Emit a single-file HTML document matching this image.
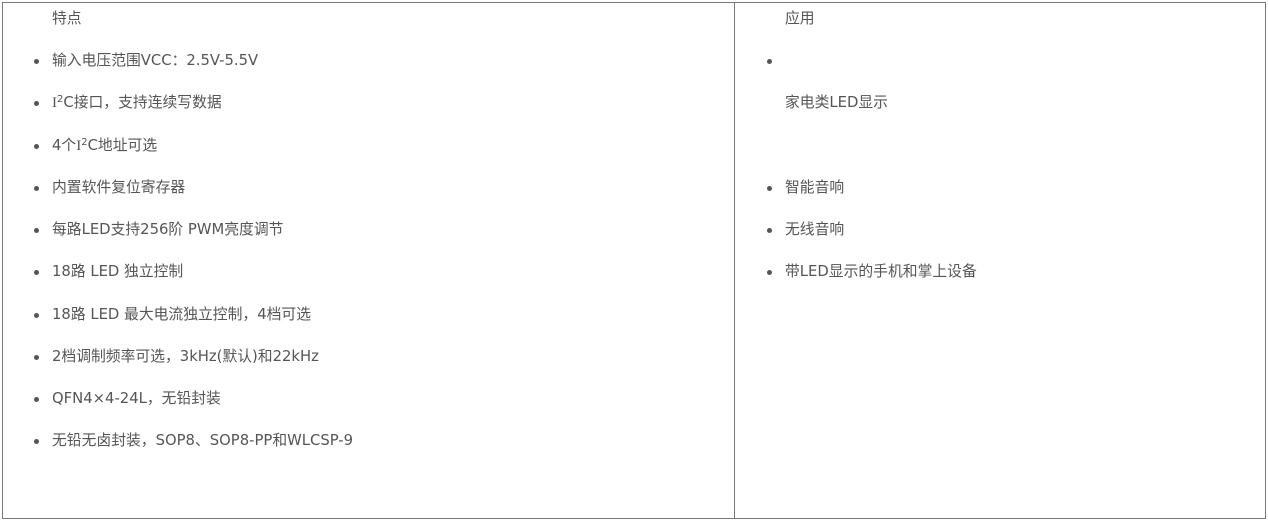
<!DOCTYPE html>
<html><head><meta charset="utf-8"><style>
body{margin:0;width:1268px;height:521px;background:#fff;position:relative;overflow:hidden;font-family:"DejaVu Sans","Noto Sans CJK SC",sans-serif;font-size:14.8px;color:#555}
.box{position:absolute;left:2px;top:2px;width:1264px;height:517px;border:1px solid #777;box-sizing:border-box}
.div{position:absolute;left:734px;top:2px;width:1px;height:517px;background:#777}
.t{position:absolute;line-height:20px;white-space:nowrap;margin-top:1px}
.b{position:absolute;width:5px;height:5px;border-radius:50%;background:#555}
sup{font-size:10px;line-height:0;vertical-align:5px}
.s{font-family:"Liberation Serif",serif;font-size:15px}
</style></head><body>
<div class="box"></div><div class="div"></div>
<div class="t" style="left:52px;top:8px">特点</div>
<div class="b" style="left:34px;top:59px"></div><div class="t" style="left:52px;top:50px">输入电压范围VCC：2.5V-5.5V</div>
<div class="b" style="left:34px;top:101px"></div><div class="t" style="left:52px;top:92px"><span class="s">I</span><sup>2</sup>C接口，支持连续写数据</div>
<div class="b" style="left:34px;top:144px"></div><div class="t" style="left:52px;top:135px">4个<span class="s">I</span><sup>2</sup>C地址可选</div>
<div class="b" style="left:34px;top:186px"></div><div class="t" style="left:52px;top:177px">内置软件复位寄存器</div>
<div class="b" style="left:34px;top:228px"></div><div class="t" style="left:52px;top:219px">每路LED支持256阶 PWM亮度调节</div>
<div class="b" style="left:34px;top:270px"></div><div class="t" style="left:52px;top:261px">18路 LED 独立控制</div>
<div class="b" style="left:34px;top:313px"></div><div class="t" style="left:52px;top:304px">18路 LED 最大电流独立控制，4档可选</div>
<div class="b" style="left:34px;top:355px"></div><div class="t" style="left:52px;top:346px">2档调制频率可选，3kHz(默认)和22kHz</div>
<div class="b" style="left:34px;top:397px"></div><div class="t" style="left:52px;top:388px">QFN4×4-24L，无铅封装</div>
<div class="b" style="left:34px;top:439px"></div><div class="t" style="left:52px;top:430px">无铅无卤封装，SOP8、SOP8-PP和WLCSP-9</div>
<div class="t" style="left:785px;top:8px">应用</div>
<div class="b" style="left:767px;top:59px"></div>
<div class="t" style="left:785px;top:92px">家电类LED显示</div>
<div class="b" style="left:767px;top:186px"></div><div class="t" style="left:785px;top:177px">智能音响</div>
<div class="b" style="left:767px;top:228px"></div><div class="t" style="left:785px;top:219px">无线音响</div>
<div class="b" style="left:767px;top:270px"></div><div class="t" style="left:785px;top:261px">带LED显示的手机和掌上设备</div>
</body></html>
